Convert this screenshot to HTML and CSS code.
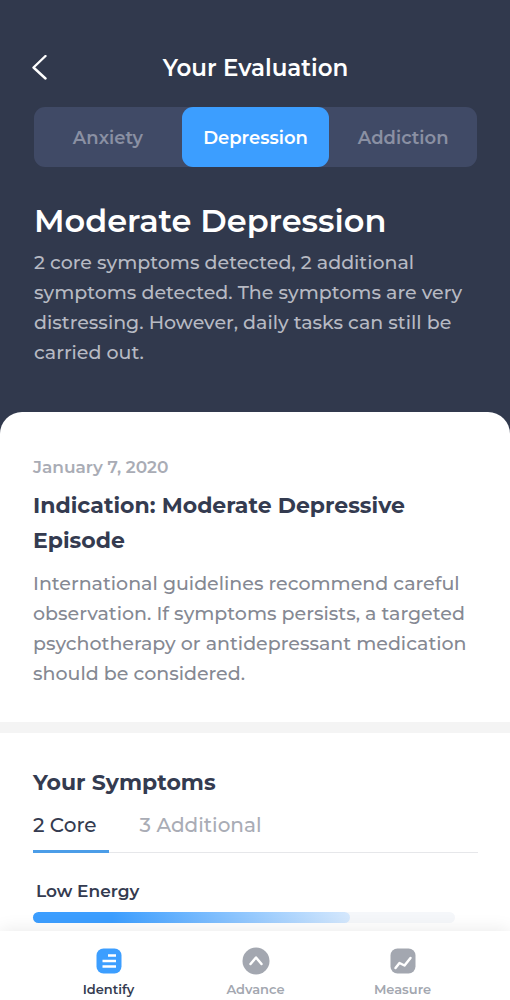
FILE: index.html
```html
<!DOCTYPE html>
<html lang="en">
<head>
<meta charset="utf-8">
<meta name="viewport" content="width=device-width, initial-scale=1">
<title>Your Evaluation</title>
<link rel="stylesheet" href="styles.css">
</head>
<body>
<div class="app">
  <main class="content">
    <header class="hero">
      <div class="topbar">
        <button class="back" type="button" aria-label="Back">
          <svg width="16" height="26" viewBox="0 0 16 26" fill="none" stroke="currentColor" stroke-width="2.4" stroke-linecap="round" stroke-linejoin="round"><path d="M13.500 1 1.500 12.500l12 11"/></svg>
        </button>
        <h1 class="topbar-title">Your Evaluation</h1>
      </div>
      <div class="segments" role="tablist" aria-label="Evaluation">
        <button class="segment" type="button" role="tab" aria-selected="false">Anxiety</button>
        <button class="segment segment-active" type="button" role="tab" aria-selected="true">Depression</button>
        <button class="segment" type="button" role="tab" aria-selected="false">Addiction</button>
      </div>
      <h2 class="result-title">Moderate Depression</h2>
      <p class="copy result-copy">2 core symptoms detected, 2 additional symptoms detected. The symptoms are very distressing. However, daily tasks can still be carried out.</p>
    </header>
    <div class="sheet">
      <section class="indication">
        <time class="date" datetime="2020-01-07">January 7, 2020</time>
        <h2 class="heading">Indication: Moderate Depressive Episode</h2>
        <p class="copy indication-copy">International guidelines recommend careful observation. If symptoms persists, a targeted psychotherapy or antidepressant medication should be considered.</p>
      </section>
      <section class="symptoms">
        <h2 class="heading">Your Symptoms</h2>
        <div class="tabs" role="tablist" aria-label="Symptoms">
          <button class="tab tab-active" type="button" role="tab" aria-selected="true">2 Core</button>
          <button class="tab" type="button" role="tab" aria-selected="false">3 Additional</button>
        </div>
        <div class="symptom">
          <h3 class="symptom-name" id="low-energy">Low Energy</h3>
          <div class="meter" role="meter" aria-labelledby="low-energy" aria-valuemin="0" aria-valuemax="100" aria-valuenow="75">
            <div class="meter-fill" style="width: 75%"></div>
          </div>
        </div>
      </section>
    </div>
  </main>
  <nav class="bottom-nav" aria-label="Main">
    <a class="nav-item nav-active" href="#identify" aria-current="page">
      <svg width="28" height="28" viewBox="0 0 28 28"><rect x="1.5" y="1.5" width="25" height="25" rx="7" fill="currentColor"/><path d="M13 8.500h8M7.500 14h13.500M7.500 19.500h13.500" stroke="#fff" stroke-width="2.500" fill="none"/></svg>
      <span class="nav-label">Identify</span>
    </a>
    <a class="nav-item" href="#advance">
      <svg width="28" height="28" viewBox="0 0 28 28"><circle cx="14" cy="14" r="13.500" fill="currentColor"/><path d="m8.500 17 5.500-6.500 5.500 6.500" stroke="#fff" stroke-width="2.500" stroke-linecap="round" stroke-linejoin="round" fill="none"/></svg>
      <span class="nav-label">Advance</span>
    </a>
    <a class="nav-item" href="#measure">
      <svg width="28" height="28" viewBox="0 0 28 28"><rect x="1.5" y="1.5" width="25" height="25" rx="7" fill="currentColor"/><path d="m6.500 21 4-5 5 2.500L21.500 11" stroke="#fff" stroke-width="2.500" stroke-linecap="round" stroke-linejoin="round" fill="none"/></svg>
      <span class="nav-label">Measure</span>
    </a>
  </nav>
</div>
</body>
</html>
```

FILE: styles.css
```css
* {
  box-sizing: border-box;
}

body,
h1,
h2,
h3,
p {
  margin: 0;
}

body {
  font-family: Montserrat, Inter, "Open Sans", sans-serif;
  color: #343b50;
  background: #fff;
}

button {
  font: inherit;
  color: inherit;
  background: none;
  border: 0;
  padding: 0;
  cursor: pointer;
}

.app {
  display: flex;
  flex-direction: column;
  height: 100vh;
}

.content {
  display: flex;
  flex-direction: column;
  flex: 1;
  min-height: 0;
  overflow-y: auto;
  background: #31394d;
}

.hero {
  padding: 47px 33px 44px 34px;
  color: #fff;
}

.topbar {
  display: grid;
  grid-template-columns: 16px 1fr 16px;
  align-items: center;
  height: 40px;
  margin-bottom: 20px;
}

.back {
  display: flex;
  margin-left: -2px;
}

.topbar-title {
  font-size: 23px;
  line-height: 42px;
  font-weight: 600;
  text-align: center;
}

.segments {
  display: grid;
  grid-template-columns: repeat(3, 1fr);
  border-radius: 11px;
  background: #404a66;
}

.segment {
  height: 60px;
  padding-top: 2px;
  border-radius: 11px;
  font-size: 18px;
  font-weight: 600;
  color: #8a90a3;
}

.segment-active {
  color: #fff;
  background: #3c9eff;
}

.result-title {
  margin-top: 34px;
  font-size: 32px;
  line-height: 40px;
  font-weight: 600;
}

.copy {
  font-size: 19px;
  line-height: 30px;
  font-weight: 500;
}

.result-copy {
  margin-top: 7px;
  color: #b7bac3;
}

.sheet {
  flex: 1 0 auto;
  border-radius: 22px 22px 0 0;
  background: #fff;
}

.indication {
  padding: 43px 33px 33px;
  border-bottom: 11px solid #f4f4f4;
}

.date {
  display: block;
  font-size: 17px;
  line-height: 24px;
  font-weight: 600;
  color: #a9acb5;
}

.heading {
  font-size: 22px;
  line-height: 35px;
  font-weight: 700;
}

.indication .heading {
  margin-top: 9px;
}

.indication-copy {
  margin-top: 11px;
  color: #858993;
}

.symptoms {
  padding: 32px 32px 4px 33px;
}

.tabs {
  display: flex;
  gap: 31px;
  margin-top: 8px;
  border-bottom: 1px solid #e6e7ea;
}

.tab {
  height: 45px;
  margin-bottom: -1px;
  padding: 4px 0 11px;
  border-bottom: 3px solid transparent;
  font-size: 20px;
  line-height: 27px;
  font-weight: 500;
  color: #a9acb5;
}

.tab-active {
  padding-right: 12px;
  border-bottom-color: #4b9de8;
  color: #343b50;
}

.symptom {
  padding-right: 23px;
}

.symptom-name {
  margin-top: 26px;
  padding-left: 3px;
  font-size: 17px;
  line-height: 24px;
  font-weight: 600;
}

.meter {
  height: 11px;
  margin-top: 9px;
  border-radius: 6px;
  background: #f5f7fa;
}

.meter-fill {
  height: 100%;
  border-radius: 6px;
  background: linear-gradient(90deg, #3c9eff 25%, #d5e8fd);
}

.bottom-nav {
  position: relative;
  display: grid;
  grid-template-columns: repeat(3, 1fr);
  padding: 16px 34px 0 35px;
  height: 69px;
  background: #fff;
  box-shadow: 0 -2px 16px rgba(0, 0, 0, 0.08);
}

.nav-item {
  display: flex;
  flex-direction: column;
  align-items: center;
  gap: 4px;
  color: #a3a7b0;
  text-decoration: none;
}

.nav-active {
  color: #3c9eff;
}

.nav-label {
  font-size: 13px;
  line-height: 20px;
  font-weight: 600;
}

.nav-active .nav-label {
  color: #343b50;
}
```
